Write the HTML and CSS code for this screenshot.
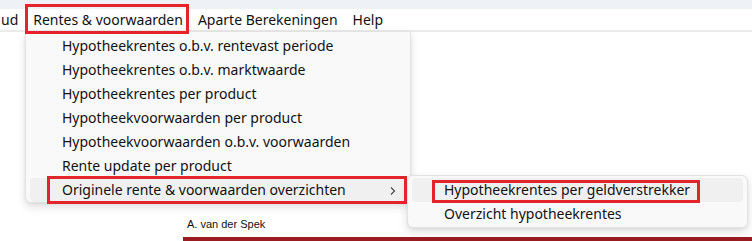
FILE: index.html
```html
<!DOCTYPE html>
<html lang="nl">
<head>
<meta charset="utf-8">
<title>Rentes &amp; voorwaarden</title>
<link rel="stylesheet" href="styles.css">
</head>
<body>
<div class="app">
  <div class="topstrip"></div>
  <nav class="menubar">
    <span class="mi first">ud</span>
    <span class="mi open">Rentes &amp; voorwaarden</span>
    <span class="mi">Aparte Berekeningen</span>
    <span class="mi">Help</span>
  </nav>
  <main class="content"></main>
  <footer class="footer">
    <span class="user">A. van der Spek</span>
    <div class="bar"></div>
  </footer>

  <div class="menu dropdown">
    <div class="row">Hypotheekrentes o.b.v. rentevast periode</div>
    <div class="row">Hypotheekrentes o.b.v. marktwaarde</div>
    <div class="row">Hypotheekrentes per product</div>
    <div class="row">Hypotheekvoorwaarden per product</div>
    <div class="row">Hypotheekvoorwaarden o.b.v. voorwaarden</div>
    <div class="row">Rente update per product</div>
    <div class="row hover">
      <span>Originele rente &amp; voorwaarden overzichten</span>
      <svg class="chev" width="6" height="10" viewBox="0 0 6 10"><path d="M1 1.5 L4.5 5 L1 8.5" fill="none" stroke="#444" stroke-width="1.1"/></svg>
    </div>
  </div>

  <div class="menu submenu">
    <div class="row hover">Hypotheekrentes per geldverstrekker</div>
    <div class="row">Overzicht hypotheekrentes</div>
  </div>

  <div class="mark mark-top"></div>
  <div class="mark mark-sub"></div>
  <div class="mark mark-item"></div>
</div>
</body>
</html>
```

FILE: styles.css
```css
* { box-sizing: border-box; }
html, body { margin: 0; padding: 0; background: #fff; }
body {
  font-family: "Noto Sans", "Open Sans", sans-serif;
  color: #111;
}
.app {
  position: relative;
  width: 752px;
  height: 241px;
  overflow: hidden;
  display: flex;
  flex-direction: column;
}
.topstrip {
  height: 9px;
  background: #eef2f7;
}
.menubar {
  height: 23px;
  display: flex;
  align-items: flex-start;
  gap: 15px;
  padding-left: 1px;
  border-bottom: 2px solid #ebebeb;
  font-size: 14px;
  line-height: 21px;
  white-space: nowrap;
}
.mi { display: block; }
.content { flex: 1; }
.footer {
  display: flex;
  flex-direction: column;
  padding-left: 183px;
}
.user {
  font-family: "Liberation Sans", Arial, sans-serif;
  font-size: 11px;
  line-height: 14px;
  padding-left: 4px;
  margin-bottom: 6px;
  color: #111;
}
.bar {
  height: 4px;
  background: #9b1c20;
}

.menu {
  position: absolute;
  background: #f9f9f9;
  border: 1px solid #e2e2e2;
  border-radius: 6px;
  box-shadow: 0 4px 10px rgba(0,0,0,0.13), 0 1px 3px rgba(0,0,0,0.05);
  font-size: 14px;
  white-space: nowrap;
}
.dropdown {
  left: 25px;
  top: 31px;
  width: 386px;
  padding: 2px 4px 0;
  border-top-left-radius: 0;
  border-top-right-radius: 0;
}
.submenu {
  left: 407px;
  top: 175px;
  width: 341px;
  padding: 2px 4px 1px;
}
.row {
  height: 24px;
  line-height: 24px;
  padding-left: 32px;
  padding-right: 10px;
  border-radius: 4px;
  display: flex;
  align-items: center;
}
.row > span { flex: 1; }
.row.hover { background: #f0f0f0; }
.chev { margin-top: 1px; }

.mark {
  position: absolute;
  border: 3px solid #e3242b;
}
.mark-top { left: 25px; top: 4px; width: 164px; height: 30px; }
.mark-sub { left: 47px; top: 176px; width: 360px; height: 28px; }
.mark-item { left: 432px; top: 180px; width: 268px; height: 23px; }
```
